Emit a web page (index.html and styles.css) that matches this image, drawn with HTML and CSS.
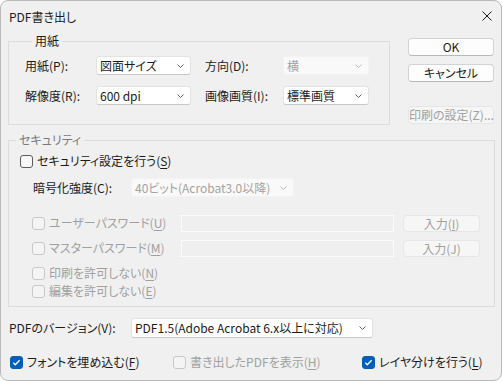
FILE: index.html
```html
<!DOCTYPE html>
<html lang="ja">
  <head>
    <meta charset="UTF-8" />
    <meta name="viewport" content="width=device-width, initial-scale=1.0" />
    <title>PDF書き出し</title>
    <!-- Dialog styles -->
    <link rel="stylesheet" href="styles.css">
  </head>
  <body>
    <div class="dialog">
      <!-- Title bar -->
      <div class="titlebar">
        <span class="title">PDF書き出し</span>
        <svg class="close" width="10" height="10" viewBox="0 0 10 10">
          <path d="M0.5 0.5L9.5 9.5M9.5 0.5L0.5 9.5" stroke="#1a1a1a" stroke-width="1" fill="none" />
        </svg>
      </div>

      <div class="dialog-body">
        <div class="top">
          <!-- Paper group -->
          <fieldset class="group paper">
            <legend>用紙</legend>
            <div class="paper-grid">
              <span class="label">用紙(P):</span>
              <div class="select w95">
                <span>図面サイズ</span>
                <svg class="chev" width="7" height="4" viewBox="0 0 7 4"><path d="M0.5 0.5L3.5 3.5L6.5 0.5" /></svg>
              </div>
              <span class="label">方向(D):</span>
              <div class="select w86 disabled">
                <span>横</span>
                <svg class="chev" width="7" height="4" viewBox="0 0 7 4"><path d="M0.5 0.5L3.5 3.5L6.5 0.5" /></svg>
              </div>

              <span class="label">解像度(R):</span>
              <div class="select w95">
                <span>600 dpi</span>
                <svg class="chev" width="7" height="4" viewBox="0 0 7 4"><path d="M0.5 0.5L3.5 3.5L6.5 0.5" /></svg>
              </div>
              <span class="label">画像画質(I):</span>
              <div class="select w86">
                <span>標準画質</span>
                <svg class="chev" width="7" height="4" viewBox="0 0 7 4"><path d="M0.5 0.5L3.5 3.5L6.5 0.5" /></svg>
              </div>
            </div>
          </fieldset>

          <!-- Dialog buttons -->
          <div class="side-buttons">
            <button class="btn">OK</button>
            <button class="btn">キャンセル</button>
            <button class="btn disabled print">印刷の設定(Z)...</button>
          </div>
        </div>

        <!-- Security group -->
        <fieldset class="group security">
          <legend>セキュリティ</legend>

          <label class="row row-a check">
            <span class="cb"></span>
            <span>セキュリティ設定を行う(<u>S</u>)</span>
          </label>

          <div class="row row-b">
            <span class="label enc-label">暗号化強度(C):</span>
            <div class="select w163 disabled">
              <span>40ビット(Acrobat3.0以降)</span>
              <svg class="chev" width="7" height="4" viewBox="0 0 7 4"><path d="M0.5 0.5L3.5 3.5L6.5 0.5" /></svg>
            </div>
          </div>

          <div class="row row-c">
            <label class="check pw-check disabled">
              <span class="cb"></span>
              <span>ユーザーパスワード(<u>U</u>)</span>
            </label>
            <div class="textbox"></div>
            <button class="btn disabled small">入力(<u>I</u>)</button>
          </div>

          <div class="row row-d">
            <label class="check pw-check disabled">
              <span class="cb"></span>
              <span>マスターパスワード(<u>M</u>)</span>
            </label>
            <div class="textbox"></div>
            <button class="btn disabled small">入力(J)</button>
          </div>

          <label class="row row-e check disabled">
            <span class="cb"></span>
            <span>印刷を許可しない(<u>N</u>)</span>
          </label>

          <label class="row row-f check disabled">
            <span class="cb"></span>
            <span>編集を許可しない(<u>E</u>)</span>
          </label>
        </fieldset>

        <!-- PDF version -->
        <div class="version-row">
          <span class="label version-label">PDFのバージョン(V):</span>
          <div class="select w242">
            <span>PDF1.5(Adobe Acrobat 6.x以上に対応)</span>
            <svg class="chev" width="7" height="4" viewBox="0 0 7 4"><path d="M0.5 0.5L3.5 3.5L6.5 0.5" /></svg>
          </div>
        </div>

        <!-- Bottom options -->
        <div class="options-row">
          <label class="check opt1">
            <span class="cb checked">
              <svg width="11" height="11" viewBox="0 0 11 11"><path d="M2.3 5.8L4.3 7.8L8.6 3.3" /></svg>
            </span>
            <span>フォントを埋め込む(<u>F</u>)</span>
          </label>
          <label class="check opt2 disabled">
            <span class="cb"></span>
            <span>書き出したPDFを表示(<u>H</u>)</span>
          </label>
          <label class="check">
            <span class="cb checked">
              <svg width="11" height="11" viewBox="0 0 11 11"><path d="M2.3 5.8L4.3 7.8L8.6 3.3" /></svg>
            </span>
            <span>レイヤ分けを行う(<u>L</u>)</span>
          </label>
        </div>
      </div>
    </div>
  </body>
</html>
```

FILE: styles.css
```css
* {
  box-sizing: border-box;
}
body {
  margin: 0;
  background-color: #ffffff; /* Visible only at the rounded corners */
  font-family: "Noto Sans CJK JP", "Noto Sans", sans-serif;
  font-size: 12px;
  font-feature-settings: "palt"; /* Narrow kana, closer to Meiryo UI */
  line-height: 16px;
  color: #1b1b1b;
}
.dialog {
  width: 502px;
  height: 381px;
  border: 1px solid #b9b9b9;
  border-radius: 8px;
  background-color: #f0f0f0;
  overflow: hidden;
}
.titlebar {
  height: 32px;
  display: flex;
  align-items: center;
  justify-content: space-between;
  padding: 0 9px 0 8px;
}
.close {
  margin-bottom: 2px;
}
.dialog-body {
  padding: 0 7px;
}
.top {
  display: flex;
  align-items: flex-start;
}

/* Group boxes */
.group {
  margin: 0;
  min-width: 0;
  border: 1px solid #dcdcdc;
}
.group legend {
  margin-left: 7px;
  padding: 0 3px;
  line-height: 16px;
}
.paper {
  width: 382px;
  padding: 7px 0 19px 16px;
}
.paper-grid {
  display: grid;
  grid-template-columns: 71px 109px 78px 86px;
  row-gap: 11px;
  align-items: center;
}
.security {
  width: 487px;
  margin-top: 7px;
  padding: 0 0 7px 0;
}
.security legend {
  color: #7a7a7a;
}

/* Combo boxes */
.select {
  height: 19px;
  display: flex;
  align-items: center;
  justify-content: space-between;
  padding: 0 6px 0 3px;
  background-color: #ffffff;
  border: 1px solid #e3e3e3;
  border-bottom-color: #c9c9c9;
  border-radius: 3px;
  white-space: nowrap;
}
.chev path {
  stroke: #5f5f5f;
  stroke-width: 1;
  fill: none;
}
.select.disabled {
  background-color: #f9f9f9;
  border-color: #f3f3f3;
  color: #a3a3a3;
}
.select.disabled .chev path {
  stroke: #bcbcbc;
}
.w95 { width: 95px; }
.w86 { width: 86px; }
.w163 { width: 163px; }
.w242 { width: 242px; height: 20px; }

/* Push buttons */
.side-buttons {
  display: flex;
  flex-direction: column;
  width: 86px;
  margin: 5px 0 0 18px;
  gap: 8px;
}
.btn {
  height: 18px;
  padding: 0;
  font: inherit;
  line-height: 16px;
  color: #1b1b1b;
  background-color: #fdfdfd;
  border: 1px solid #d3d3d3;
  border-bottom-color: #b8b8b8;
  border-radius: 4px;
  white-space: nowrap;
}
.btn.disabled {
  background-color: #f6f6f6;
  border-color: #e6e6e6;
  color: #a0a0a0;
}
.btn.print {
  margin-top: 16px;
}
.btn.small {
  width: 77px;
  height: 17px;
  margin-left: 9px;
}

/* Rows in the security group */
.row {
  display: flex;
  align-items: center;
}
.row-a { margin: 5px 0 0 11px; height: 16px; }
.row-b { margin-top: 9px; padding-left: 24px; height: 19px; }
.row-c { margin-top: 17px; padding-left: 23px; height: 18px; }
.row-d { margin-top: 7px; padding-left: 23px; height: 18px; }
.row-e { margin: 8px 0 0 23px; height: 16px; }
.row-f { margin: 2px 0 0 23px; height: 16px; }
.enc-label {
  width: 98px;
}
.pw-check {
  width: 149px;
}
.textbox {
  width: 213px;
  height: 17px;
  background-color: #efefef;
  border: 1px solid #fbfbfb;
}

/* Check boxes */
.check {
  display: flex;
  align-items: center;
  white-space: nowrap;
}
.check u {
  text-underline-offset: 2px;
}
.cb {
  width: 13px;
  height: 13px;
  margin-right: 4px;
  flex-shrink: 0;
  display: flex;
  align-items: center;
  justify-content: center;
  border: 1px solid #5c5c5c;
  border-radius: 3px;
  background-color: #f7f7f7;
}
.check.disabled {
  color: #a0a0a0;
}
.check.disabled .cb {
  border-color: #c8c8c8;
  background-color: #f4f4f4;
}
.cb.checked {
  background-color: #005fb8;
  border-color: #005fb8;
}
.cb.checked path {
  stroke: #ffffff;
  stroke-width: 1.3;
  fill: none;
}

/* Version and bottom options */
.version-row {
  display: flex;
  align-items: center;
  margin-top: 11px;
  height: 20px;
}
.version-label {
  width: 123px;
  padding-left: 1px;
}
.options-row {
  display: flex;
  align-items: center;
  margin: 16px 0 0 2px;
  height: 16px;
}
.opt1 {
  width: 163px;
}
.opt2 {
  width: 189px;
}
```
